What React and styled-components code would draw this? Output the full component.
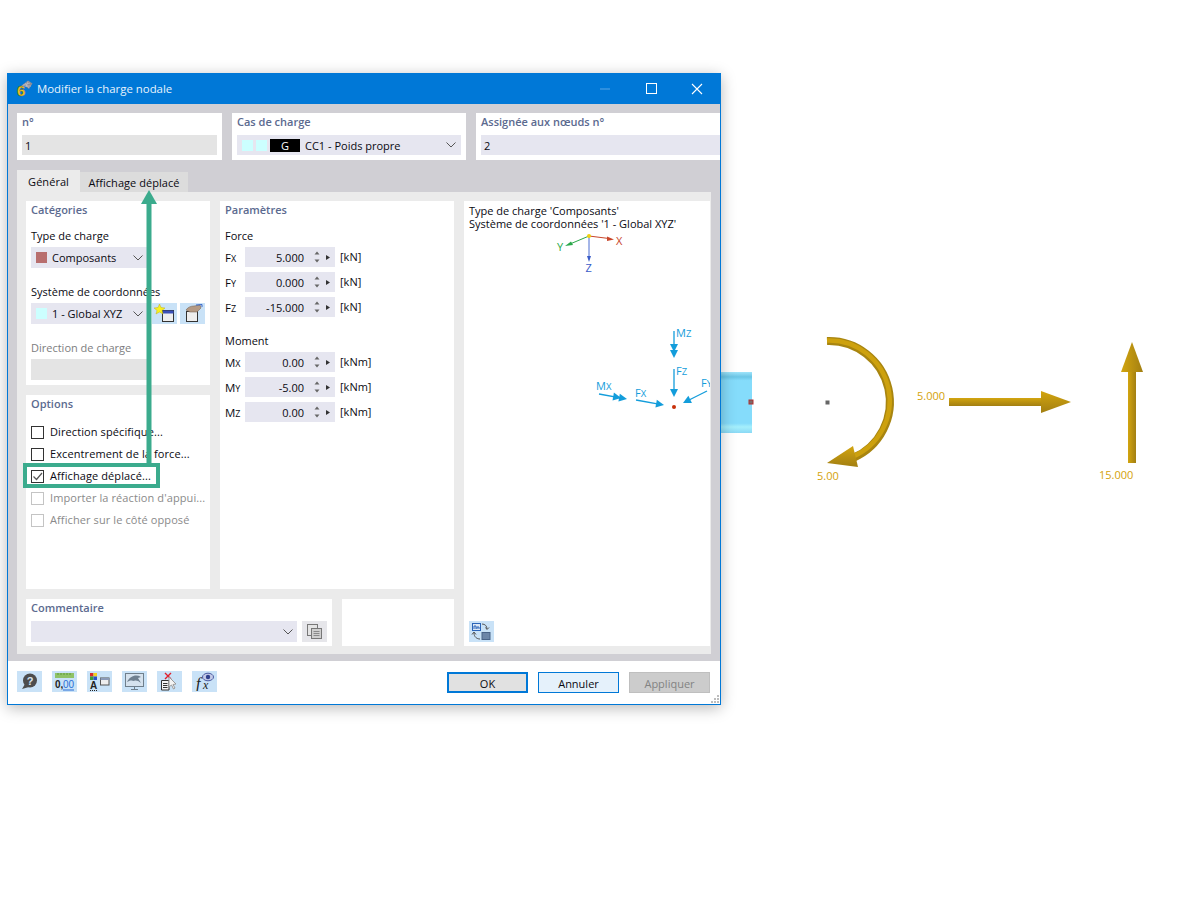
import React from "react";
import styled, { createGlobalStyle } from "styled-components";

const Global = createGlobalStyle`
  html, body { margin: 0; padding: 0; background: #fff; }
  body { font-family: "Open Sans", "Noto Sans", "Liberation Sans", sans-serif; font-size: 11px; color: #0a0a12; }
  * { box-sizing: border-box; }
`;

const Page = styled.div`
  display: flex;
  align-items: flex-start;
  width: 1200px;
  height: 900px;
  padding: 73px 0 0 7px;
  overflow: hidden;
`;
const Window = styled.div`
  position: relative;
  z-index: 1;
  flex: none;
  width: 714px;
  height: 632px;
  border: 1px solid #0078d7;
  background: #d0cfd4;
  box-shadow: 0 3px 14px rgba(0, 0, 0, 0.28);
  display: flex;
  flex-direction: column;
  overflow: hidden;
`;
const TitleBar = styled.div`
  height: 30px;
  flex: none;
  background: #0078d7;
  color: #e8f3fc;
  display: flex;
  align-items: center;
  padding-left: 8px;
  font-size: 11.4px;
`;
const TitleText = styled.span`
  margin: 0 0 2px 4px;
`;
const WinButtons = styled.div`
  margin-left: auto;
  display: flex;
`;
const WinButton = styled.div`
  width: 46px;
  height: 30px;
  padding-bottom: 1px;
  display: flex;
  align-items: center;
  justify-content: center;
`;
const TopRow = styled.div`
  display: flex;
  gap: 10px;
  padding: 9px 0 0 9px;
  flex: none;
`;
const TopPanel = styled.div`
  background: #fff;
  width: ${(p) => p.$w}px;
  height: 47px;
  padding: 0 ${(p) => p.$pr ?? 5}px 0 5px;
  flex: none;
`;
const Heading = styled.div`
  height: 18px;
  line-height: 18px;
  font-weight: 600;
  color: ${(p) => p.$muted || "#5b6a8f"};
  white-space: nowrap;
`;
const Field = styled.div`
  height: ${(p) => p.$h || 20}px;
  margin-top: ${(p) => p.$mt ?? 4}px;
  background: ${(p) => (p.$gray ? "#e4e4e4" : "#e6e6f0")};
  display: flex;
  align-items: center;
  padding: 0 ${(p) => p.$pr ?? p.$pad ?? 3}px 0 ${(p) => p.$pad ?? 3}px;
  white-space: nowrap;
  width: ${(p) => (p.$w ? `${p.$w}px` : "auto")};
`;
const Swatch = styled.span`
  width: 11px;
  height: 11px;
  flex: none;
  background: ${(p) => p.$c};
  margin-right: ${(p) => p.$mr ?? 5}px;
`;
const GBadge = styled.span`
  width: 30px;
  height: 13px;
  flex: none;
  background: #000;
  color: #fff;
  text-align: center;
  line-height: 13px;
  margin-right: 5px;
`;
const Chev = styled.svg`
  margin-left: auto;
  flex: none;
  display: block;
`;
const Chevron = () => (
  <Chev width="10" height="6" viewBox="0 0 10 6">
    <path d="M0.5 0.5 L5 5 L9.5 0.5" fill="none" stroke="#555" strokeWidth="1" />
  </Chev>
);

const TabBar = styled.div`
  display: flex;
  align-items: flex-end;
  height: 22px;
  margin: 10px 0 0 9px;
  flex: none;
`;
const Tab = styled.div`
  height: ${(p) => (p.$active ? 22 : 20)}px;
  width: ${(p) => p.$w}px;
  background: ${(p) => (p.$active ? "#ebebeb" : "#dcdcdc")};
  display: flex;
  align-items: center;
  justify-content: center;
  letter-spacing: 0.05px;
`;
const TabPage = styled.div`
  margin: 0 9px 0 9px;
  height: 462px;
  background: #ebebeb;
  padding: 9px 1px 8px 9px;
  display: grid;
  grid-template-columns: 184px 234px 246px;
  grid-template-rows: 388px 47px;
  gap: 10px;
  flex: none;
`;
const LeftCol = styled.div`
  display: flex;
  flex-direction: column;
  gap: 10px;
`;
const Panel = styled.div`
  background: #fff;
  padding: 0 5px;
  width: ${(p) => (p.$w ? `${p.$w}px` : "auto")};
  height: ${(p) => (p.$h ? `${p.$h}px` : "auto")};
  flex: ${(p) => (p.$h ? "none" : 1)};
`;
const FieldLabel = styled.div`
  height: 16px;
  line-height: 16px;
  margin-top: ${(p) => (p.$first ? 9 : 16)}px;
  color: ${(p) => p.$muted || "inherit"};
  white-space: nowrap;
`;
const ComboRow = styled.div`
  display: flex;
  margin-top: 3px;
  gap: 3px;
`;
const Tool = styled.div`
  width: 25px;
  height: 21px;
  flex: none;
  background: ${(p) => p.$bg || "#c9e2f7"};
  display: flex;
  align-items: center;
  justify-content: center;
`;
const CheckList = styled.div`
  margin-top: 8px;
`;
const CheckRow = styled.div`
  height: 22px;
  display: flex;
  align-items: center;
  gap: 6px;
  white-space: nowrap;
  color: ${(p) => (p.$off ? "#8a8a8a" : "inherit")};
`;
const CheckText = styled.span`
  margin-bottom: 2px;
  letter-spacing: 0.1px;
`;
const Box = styled.span`
  width: 13px;
  height: 13px;
  flex: none;
  border: 1px solid ${(p) => (p.$off ? "#c4c4c4" : "#333")};
  background: #fff;
  display: flex;
  align-items: center;
  justify-content: center;
`;
const ParamRows = styled.div`
  margin-top: 3px;
  display: flex;
  flex-direction: column;
  gap: 5px;
`;
const ParamRow = styled.div`
  display: flex;
  align-items: center;
  height: 20px;
`;
const ParamLabel = styled.span`
  width: 20px;
  flex: none;
  font-size: 11.5px;
  small { font-size: 9px; }
`;
const ParamField = styled.div`
  width: 90px;
  height: 20px;
  flex: none;
  background: #e6e6f0;
  display: flex;
  align-items: center;
  justify-content: flex-end;
  padding-right: 2px;
`;
const Unit = styled.span`
  margin: 0 0 2px 5px;
`;
const SpinSvg = styled.svg`
  flex: none;
  margin-left: 5px;
  display: block;
`;
const Spin = () => (
  <SpinSvg width="24" height="14" viewBox="0 0 24 14">
    <path d="M8 1.5 L10.5 4.5 L5.5 4.5 Z" fill="#666" />
    <path d="M5.5 9.5 L10.5 9.5 L8 12.5 Z" fill="#666" />
    <path d="M17 5 L21 7.5 L17 10 Z" fill="#333" />
  </SpinSvg>
);
const Preview = styled.div`
  grid-column: 3;
  grid-row: 1 / span 2;
  background: #fff;
  padding: 3px 0 4px 5px;
  display: flex;
  flex-direction: column;
  overflow: hidden;
`;
const PreviewText = styled.div`
  line-height: 13px;
  height: 27px;
  white-space: nowrap;
`;
const PreviewDrawing = styled.svg`
  display: block;
  margin-left: -5px;
  flex: none;
`;
const PreviewTool = styled.div`
  margin-top: auto;
`;
const BottomRow = styled.div`
  grid-column: 1 / span 2;
  display: flex;
  gap: 10px;
`;
const CommentRow = styled.div`
  display: flex;
  gap: 5px;
  margin-top: 4px;
`;
const Footer = styled.div`
  margin-top: 7px;
  flex: 1;
  background: #fff;
  display: flex;
  align-items: flex-start;
  padding: 10px 10px 0 9px;
  position: relative;
`;
const FootTools = styled.div`
  display: flex;
  gap: 10px;
`;
const Buttons = styled.div`
  margin-left: auto;
  display: flex;
  gap: 10px;
  margin-top: 1px;
`;
const Btn = styled.div`
  width: 81px;
  height: 21px;
  padding-top: 1px;
  display: flex;
  align-items: center;
  justify-content: center;
  background: ${(p) => p.$bg};
  border: ${(p) => p.$b};
  color: ${(p) => p.$c || "inherit"};
`;
const Grip = styled.svg`
  position: absolute;
  right: 1px;
  bottom: 1px;
  display: block;
`;
const HighlightBox = styled.div`
  position: absolute;
  left: 15px;
  top: 389px;
  width: 137px;
  height: 25px;
  border: 4px solid #3bab8d;
  pointer-events: none;
`;
const ArrowOverlay = styled.svg`
  position: absolute;
  left: 131.5px;
  top: 116px;
  display: block;
  pointer-events: none;
`;
const Drawing = styled.svg`
  flex: none;
  display: block;
`;

const Cross = () => (
  <svg width="12" height="12" viewBox="0 0 12 12"><path d="M1 1 L11 11 M11 1 L1 11" stroke="#fff" strokeWidth="1.1" /></svg>
);

const Logo = () => (
  <svg width="17" height="18" viewBox="0 0 17 18" style={{ display: "block", overflow: "visible" }}>
    <path d="M5 6 L12 0.5 L16.5 3.5 L13 9 L9 6 Z" fill="#8c8c96" />
    <path d="M7 5 L14 3 M9 3 L13 8 M12 1.5 L10 7 M6 6 L15 6" stroke="#c8c8d0" strokeWidth=".6" />
    <text x="1" y="16" fontFamily="Liberation Sans" fontWeight="700" fontSize="15" fill="#f2c81e" stroke="#6d5a10" strokeWidth=".35">6</text>
  </svg>
);
const IconHelp = () => (
  <svg width="17" height="17" viewBox="0 0 17 17">
    <circle cx="9" cy="7.5" r="7" fill="#4d4d4d" />
    <path d="M4 11 L1 16 L8 14 Z" fill="#4d4d4d" />
    <text x="9" y="11.5" textAnchor="middle" fontFamily="Liberation Sans" fontWeight="700" fontSize="11" fill="#d8e6f2">?</text>
  </svg>
);
const IconNum = () => (
  <svg width="21" height="19" viewBox="0 0 21 19">
    <rect x="1" y="1" width="19" height="5" fill="#8fc267" />
    <path d="M4 1v2M7 1v2M10 1v2M13 1v2M16 1v2" stroke="#5d9a3a" />
    <text x="1" y="16" fontFamily="Liberation Sans" fontWeight="700" fontSize="10" fill="#222">0,</text>
    <text x="9" y="16" fontFamily="Liberation Sans" fontSize="10" fill="#2a6fd6">00</text>
    <path d="M9 18 H20" stroke="#2a6fd6" />
  </svg>
);
const IconColors = () => (
  <svg width="21" height="19" viewBox="0 0 21 19">
    <rect x="1" y="1" width="3.5" height="3.5" fill="#d62a2a" />
    <rect x="4.5" y="1" width="3.5" height="3.5" fill="#f2d21e" />
    <rect x="1" y="4.5" width="3.5" height="3.5" fill="#3a9a3a" />
    <rect x="4.5" y="4.5" width="3.5" height="3.5" fill="#2a50c8" />
    <text x="1" y="17" fontFamily="Liberation Sans" fontWeight="700" fontSize="10" fill="#222">A</text>
    <path d="M1 18.5 H9" stroke="#222" strokeDasharray="1 1" />
    <rect x="11.5" y="6" width="8.5" height="7" fill="#eee" stroke="#555" />
    <rect x="11.5" y="6" width="8.5" height="2" fill="#8a9ab8" />
  </svg>
);
const IconMonitor = () => (
  <svg width="21" height="19" viewBox="0 0 21 19">
    <rect x="1.5" y="1.5" width="18" height="13" fill="#d5e2ee" stroke="#6f7f8c" />
    <path d="M3 10 C6 4 12 2 17 5 L14 6 L17 11 C14 8 11 8 9 9 C7 8 5 9 3 10 Z" fill="#6f8090" />
    <path d="M10.5 15 V17 M7 17.5 H14" stroke="#6f7f8c" />
  </svg>
);
const IconPick = () => (
  <svg width="19" height="19" viewBox="0 0 19 19">
    <path d="M5 1 L11 7 M11 1 L5 7" stroke="#e0202c" strokeWidth="1.4" />
    <path d="M1.5 8.5 H9 V18 H1.5 Z" fill="#f5f5f5" stroke="#333" />
    <path d="M3 11.5 H7.5 M3 13.5 H7.5 M3 15.5 H7.5" stroke="#333" />
    <path d="M9 5 L9 15 L11.5 13 L13.5 17 L15 16 L13 12.5 L16 12 Z" fill="#f4f4f4" stroke="#9a9a9a" />
  </svg>
);
const IconFx = () => (
  <svg width="21" height="19" viewBox="0 0 21 19">
    <text x="2" y="17" fontFamily="Liberation Serif" fontStyle="italic" fontSize="16" fill="#222">f</text>
    <text x="9" y="17" fontFamily="Liberation Serif" fontStyle="italic" fontSize="12" fill="#222">x</text>
    <ellipse cx="14" cy="5" rx="5.5" ry="3.8" fill="#c4cbe8" stroke="#4a5aa0" />
    <circle cx="14" cy="5" r="2.2" fill="#30408c" />
  </svg>
);
const IconNew = () => (
  <svg width="21" height="19" viewBox="0 0 21 19">
    <rect x="8.5" y="6.5" width="11" height="11" fill="#eee" stroke="#333" />
    <rect x="8.5" y="6.5" width="11" height="3" fill="#3a50b8" />
    <path d="M5.5 0 L7 3.5 L11 4 L8 6.5 L9 10 L5.5 8 L2 10 L3 6.5 L0 4 L4 3.5 Z" fill="#f8f020" stroke="#b8a400" strokeWidth=".4" />
  </svg>
);
const IconHand = () => (
  <svg width="21" height="19" viewBox="0 0 21 19">
    <rect x="4.5" y="7.5" width="11" height="10" fill="#eee" stroke="#333" />
    <path d="M4 6 C6 3 9 2 12 2 L18 1 L19 4 L15 8 H8 Z" fill="#b59a84" stroke="#6b5a4c" strokeWidth=".5" />
    <path d="M14 1 L20 0.5 V3" stroke="#3a66c8" fill="none" />
  </svg>
);
const IconSwap = () => (
  <svg width="21" height="19" viewBox="0 0 21 19">
    <rect x="1.5" y="1.5" width="8" height="7" fill="#dbe8f6" stroke="#2a64b8" />
    <path d="M3 7 V4 H5 V7 M6 7 V5 H8 V7" stroke="#2a64b8" fill="none" />
    <path d="M11 2 C14 2 16 4 16 7 M14.5 5.5 L16 7.5 L18 5.5" stroke="#555" fill="none" />
    <path d="M9 17 C6 17 3 15 3 11 M1 12.5 L3 10 L5 12.5" stroke="#555" fill="none" />
    <rect x="11" y="10.5" width="8" height="7" fill="#6c86a8" stroke="#4a6488" />
  </svg>
);
const IconCopy = () => (
  <svg width="17" height="17" viewBox="0 0 17 17">
    <rect x="1.5" y="1.5" width="10" height="11" fill="#e4e4e4" stroke="#777" />
    <rect x="5.5" y="5.5" width="10" height="10" fill="#cfcfcf" stroke="#777" />
    <path d="M7.5 8.5 H13.5 M7.5 10.5 H13.5 M7.5 12.5 H13.5" stroke="#8a8a8a" />
  </svg>
);

const Head = ({ x1, y1, x2, y2, w = 5, len = 8, c = "#139ddb" }) => {
  const dx = x2 - x1, dy = y2 - y1, l = Math.hypot(dx, dy);
  const ux = dx / l, uy = dy / l;
  const bx = x2 - ux * len, by = y2 - uy * len;
  return <polygon points={`${x2},${y2} ${bx - uy * w},${by + ux * w} ${bx + uy * w},${by - ux * w}`} fill={c} />;
};
const Vec = ({ x1, y1, x2, y2, double, c = "#139ddb" }) => {
  const l = Math.hypot(x2 - x1, y2 - y1), ux = (x2 - x1) / l, uy = (y2 - y1) / l;
  return (
    <g>
      <line x1={x1} y1={y1} x2={x2 - ux * 4} y2={y2 - uy * 4} stroke={c} strokeWidth="1.3" />
      <Head x1={x1} y1={y1} x2={x2} y2={y2} w={4} len={8} c={c} />
      {double && <Head x1={x1} y1={y1} x2={x2 - ux * 6} y2={y2 - uy * 6} w={4} len={8} c={c} />}
    </g>
  );
};
const Lab = ({ x, y, a, b, c = "#139ddb" }) => (
  <text x={x} y={y} fontFamily="Open Sans" fontSize="11" fill={c}>
    {a}
    <tspan fontSize="9.5">{b}</tspan>
  </text>
);

const App = () => (
  <>
    <Global />
    <Page>
      <Window>
        <TitleBar>
          <Logo />
          <TitleText>Modifier la charge nodale</TitleText>
          <WinButtons>
            <WinButton>
              <svg width="10" height="2" viewBox="0 0 10 2"><path d="M0 1 H10" stroke="#5aa6e6" /></svg>
            </WinButton>
            <WinButton>
              <svg width="11" height="11" viewBox="0 0 11 11"><rect x=".5" y=".5" width="10" height="10" fill="none" stroke="#fff" /></svg>
            </WinButton>
            <WinButton><Cross /></WinButton>
          </WinButtons>
        </TitleBar>
        <TopRow>
          <TopPanel $w={205}>
            <Heading>n°</Heading>
            <Field $gray>1</Field>
          </TopPanel>
          <TopPanel $w={234}>
            <Heading>Cas de charge</Heading>
            <Field $pad={5}>
              <Swatch $c="#ccffff" $mr={3} />
              <Swatch $c="#ccffff" $mr={3} />
              <GBadge>G</GBadge>
              CC1 - Poids propre
              <Chevron />
            </Field>
          </TopPanel>
          <TopPanel $w={244} $pr={0}>
            <Heading>Assignée aux nœuds n°</Heading>
            <Field>2</Field>
          </TopPanel>
        </TopRow>
        <TabBar>
          <Tab $active $w={63}>Général</Tab>
          <Tab $w={108}>Affichage déplacé</Tab>
        </TabBar>
        <TabPage>
          <LeftCol>
            <Panel $h={184}>
              <Heading>Catégories</Heading>
              <FieldLabel $first>Type de charge</FieldLabel>
              <Field $mt={3} $h={21} $w={119} $pad={5} $pr={7}>
                <Swatch $c="#b86e6e" />
                Composants
                <Chevron />
              </Field>
              <FieldLabel>Système de coordonnées</FieldLabel>
              <ComboRow>
                <Field $mt={0} $h={21} $w={118} $pad={5} $pr={6}>
                  <Swatch $c="#ccffff" />
                  1 - Global XYZ
                  <Chevron />
                </Field>
                <Tool><IconNew /></Tool>
                <Tool><IconHand /></Tool>
              </ComboRow>
              <FieldLabel $muted="#7d7d80">Direction de charge</FieldLabel>
              <Field $gray $mt={3} $h={21} $w={119} />
            </Panel>
            <Panel>
              <Heading>Options</Heading>
              <CheckList>
                <CheckRow><Box /><CheckText>Direction spécifique...</CheckText></CheckRow>
                <CheckRow><Box /><CheckText>Excentrement de la force...</CheckText></CheckRow>
                <CheckRow>
                  <Box>
                    <svg width="11" height="11" viewBox="0 0 11 11"><path d="M1.5 5.5 L4.5 8.5 L10 2" fill="none" stroke="#555" strokeWidth="1.2" /></svg>
                  </Box>
                  <CheckText>Affichage déplacé...</CheckText>
                </CheckRow>
                <CheckRow $off><Box $off /><CheckText>Importer la réaction d'appui...</CheckText></CheckRow>
                <CheckRow $off><Box $off /><CheckText>Afficher sur le côté opposé</CheckText></CheckRow>
              </CheckList>
            </Panel>
          </LeftCol>
          <Panel>
            <Heading>Paramètres</Heading>
            <FieldLabel $first>Force</FieldLabel>
            <ParamRows>
              {[["F", "X", "5.000"], ["F", "Y", "0.000"], ["F", "Z", "-15.000"]].map(([a, b, v]) => (
                <ParamRow key={b}>
                  <ParamLabel>{a}<small>{b}</small></ParamLabel>
                  <ParamField>{v}<Spin /></ParamField>
                  <Unit>[kN]</Unit>
                </ParamRow>
              ))}
            </ParamRows>
            <FieldLabel>Moment</FieldLabel>
            <ParamRows>
              {[["M", "X", "0.00"], ["M", "Y", "-5.00"], ["M", "Z", "0.00"]].map(([a, b, v]) => (
                <ParamRow key={b}>
                  <ParamLabel>{a}<small>{b}</small></ParamLabel>
                  <ParamField>{v}<Spin /></ParamField>
                  <Unit>[kNm]</Unit>
                </ParamRow>
              ))}
            </ParamRows>
          </Panel>
          <Preview>
            <PreviewText>
              Type de charge 'Composants'
              <br />
              Système de coordonnées '1 - Global XYZ'
            </PreviewText>
            <PreviewDrawing width="246" height="200" viewBox="464 231 246 200">
              <line x1="589" y1="236" x2="609" y2="238.5" stroke="#c8452a" strokeWidth="1" />
              <polygon points="614,239.5 607,236.5 607,241" fill="#c8452a" />
              <text x="616" y="245" fontFamily="Open Sans" fontSize="11" fill="#c8452a">X</text>
              <line x1="589" y1="236" x2="570" y2="244" stroke="#2aa84a" strokeWidth="1" />
              <polygon points="565,246 571,241.5 573,245" fill="#2aa84a" />
              <text x="557" y="251" fontFamily="Open Sans" fontSize="11" fill="#2aa84a">Y</text>
              <line x1="589" y1="236" x2="589" y2="258" stroke="#4a6cd0" strokeWidth="1" />
              <polygon points="589,262 587,256 591,256" fill="#3a5cc8" />
              <text x="585.5" y="272" fontFamily="Open Sans" fontSize="11" fill="#3a5cc8">Z</text>
              <circle cx="589" cy="236" r="2" fill="#f0d010" />

              <Vec x1={674} y1={331} x2={674} y2={358} double />
              <Lab x={676} y={337} a="M" b="Z" />
              <Vec x1={674} y1={369} x2={674} y2={397} />
              <Lab x={676} y={375} a="F" b="Z" />
              <Vec x1={636} y1={400} x2={664} y2={405} />
              <Lab x={635} y={397} a="F" b="X" />
              <Vec x1={599} y1={394} x2={627} y2={399} double />
              <Lab x={596} y={390} a="M" b="X" />
              <Vec x1={707} y1={391} x2={683} y2={403} />
              <Lab x={701} y={387} a="F" b="Y" />
              <circle cx="674" cy="407" r="2" fill="#c8300a" />
            </PreviewDrawing>
            <PreviewTool><Tool><IconSwap /></Tool></PreviewTool>
          </Preview>
          <BottomRow>
            <Panel $h={47} $w={306}>
              <Heading>Commentaire</Heading>
              <CommentRow>
                <Field $mt={0} $h={21} $w={266} $pad={4}><Chevron /></Field>
                <Tool $bg="#e6e6ea"><IconCopy /></Tool>
              </CommentRow>
            </Panel>
            <Panel $h={47} $w={112} />
          </BottomRow>
        </TabPage>
        <Footer>
          <FootTools>
            <Tool><IconHelp /></Tool>
            <Tool><IconNum /></Tool>
            <Tool><IconColors /></Tool>
            <Tool><IconMonitor /></Tool>
            <Tool><IconPick /></Tool>
            <Tool><IconFx /></Tool>
          </FootTools>
          <Buttons>
            <Btn $bg="#e1e1e1" $b="2px solid #0078d7">OK</Btn>
            <Btn $bg="#e5f1fb" $b="1px solid #0078d7">Annuler</Btn>
            <Btn $bg="#cccccc" $b="1px solid #bfbfbf" $c="#838383">Appliquer</Btn>
          </Buttons>
          <Grip width="8" height="8" viewBox="0 0 8 8">
            <path d="M6 0h2v2H6zM3 3h2v2H3zM6 3h2v2H6zM0 6h2v2H0zM3 6h2v2H3zM6 6h2v2H6z" fill="#bdbdbd" />
          </Grip>
        </Footer>
        <ArrowOverlay width="18" height="275" viewBox="0 0 18 275">
          <rect x="6.5" y="12" width="5" height="263" fill="#3bab8d" />
          <polygon points="9,0 1,14 17,14" fill="#3bab8d" />
        </ArrowOverlay>
        <HighlightBox />
      </Window>
      <Drawing width="479" height="500" viewBox="721 73 479 500">
        <defs>
          <linearGradient id="beam" x1="0" y1="0" x2="0" y2="1">
            <stop offset="0" stopColor="#9fe4fb" />
            <stop offset=".08" stopColor="#6cc6e6" />
            <stop offset=".14" stopColor="#85dcfb" />
            <stop offset=".84" stopColor="#85dcfb" />
            <stop offset=".9" stopColor="#a5effc" />
            <stop offset="1" stopColor="#8ad9f5" />
          </linearGradient>
          <linearGradient id="goldH" x1="0" y1="0" x2="0" y2="1">
            <stop offset="0" stopColor="#d3a50f" />
            <stop offset="1" stopColor="#a27f12" />
          </linearGradient>
          <linearGradient id="goldV" x1="0" y1="0" x2="1" y2="0">
            <stop offset="0" stopColor="#d3a50f" />
            <stop offset="1" stopColor="#a27f12" />
          </linearGradient>
        </defs>
        <rect x="721" y="372" width="31" height="61" fill="url(#beam)" />
        <rect x="749" y="400" width="4" height="4" fill="#7b6a6a" stroke="#b03030" />
        <rect x="825.5" y="400.5" width="4" height="4" fill="#666" />
        <path d="M827 341 A61 61 0 0 1 853 458" fill="none" stroke="#a88510" strokeWidth="8" />
        <path d="M827 340.5 A60.5 60.5 0 0 1 852 457" fill="none" stroke="#cda10e" strokeWidth="4.5" />
        <polygon points="827,463 853,446 858,467" fill="url(#goldH)" />
        <rect x="949" y="398" width="92" height="8" fill="url(#goldH)" />
        <polygon points="1041,391 1071,402 1041,413" fill="url(#goldH)" />
        <rect x="1128" y="372" width="8" height="91" fill="url(#goldV)" />
        <polygon points="1132,342 1121,372 1143,372" fill="url(#goldV)" />
        <text x="817" y="480" fontFamily="Open Sans" fontSize="11" fill="#d4a20a">5.00</text>
        <text x="917" y="400" fontFamily="Open Sans" fontSize="11" fill="#d4a20a">5.000</text>
        <text x="1099" y="479" fontFamily="Open Sans" fontSize="11" fill="#d4a20a">15.000</text>
      </Drawing>
    </Page>
  </>
);

export default App;
